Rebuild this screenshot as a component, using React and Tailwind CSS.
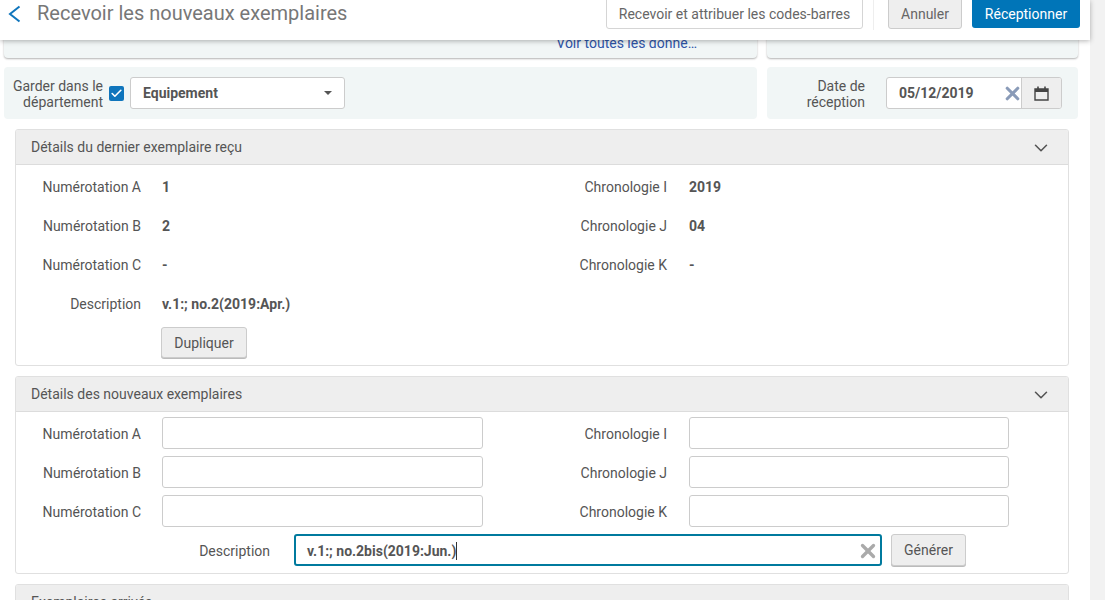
import React from 'react';
import { ChevronDown, X, Check } from 'lucide-react';

const font = 'font-[Roboto,sans-serif]';

function Panel({ title, children, className = '', chevron = true }) {
  return (
    <section className={`ml-[15px] mr-[21px] border border-[#e0e0e0] rounded-[3px] overflow-hidden bg-white ${className}`}>
      <div className="h-[35px] bg-[#eeeeee] border-b border-[#dcdcdc] flex items-center justify-between pl-[15px] pr-[16px]">
        <span className="text-[14px] text-[#555555]">{title}</span>
        {chevron && <ChevronDown className="w-[22px] h-[22px] text-[#555555] mt-px" strokeWidth={1.7} />}
      </div>
      {children}
    </section>
  );
}

function ReadRow({ left, leftValue, right, rightValue }) {
  return (
    <div className="h-[39px] flex items-center text-[14px] text-[#555555]">
      <span className="w-[125px] text-right">{left}</span>
      <span className="ml-[21px] w-[321px] font-bold">{leftValue}</span>
      <span className="w-[184px] text-right">{right}</span>
      <span className="ml-[22px] font-bold">{rightValue}</span>
    </div>
  );
}

function FieldRow({ left, right }) {
  return (
    <div className="h-[32px] flex items-center text-[14px] text-[#555555]">
      <span className="w-[125px] pt-[2px] text-right">{left}</span>
      <div className="ml-[21px] w-[321px] h-[32px] bg-white border border-[#cccccc] rounded-[3px]"></div>
      <span className="w-[184px] pt-[2px] text-right">{right}</span>
      <div className="ml-[22px] w-[320px] h-[32px] bg-white border border-[#cccccc] rounded-[3px]"></div>
    </div>
  );
}

export default function App() {
  return (
    <div className={`${font} w-[1105px] h-[600px] overflow-hidden flex bg-[#f2f2f2]`}>
      <div className="w-[1090px] h-full bg-white flex flex-col">
        {/* Top bar */}
        <header className="relative z-10 h-[40px] shrink-0 bg-white shadow-[0_1px_5px_rgba(0,0,0,0.3)] flex items-start">
          <svg className="ml-[6px] mt-[4px] w-[16px] h-[20px] text-[#0f75bc]" viewBox="0 0 16 20" fill="none" stroke="currentColor" strokeWidth="2">
            <path d="M13.5 2.5 L4 10 L13.5 17.5" />
          </svg>
          <h1 className="ml-[15px] mt-0 leading-[26px] text-[20px] font-normal text-[#777777]">
            Recevoir les nouveaux exemplaires
          </h1>
          <div className="ml-auto mr-[10px] flex items-start text-[14px]">
            <button className="w-[257px] h-[30px] -mt-px pt-px bg-white border border-[#d5d5d5] rounded-b-[3px] text-[#666666]">
              Recevoir et attribuer les codes-barres
            </button>
            <div className="ml-[10px] w-px h-[30px] bg-[#eeeeee]"></div>
            <button className="ml-[14px] w-[74px] h-[30px] -mt-px pt-px bg-[#eeeeee] border border-[#cccccc] rounded-b-[3px] text-[#666666]">
              Annuler
            </button>
            <button className="ml-[10px] w-[108px] h-[29px] -mt-px pt-px bg-[#0075b8] rounded-b-[3px] text-white">
              Réceptionner
            </button>
          </div>
        </header>

        {/* Cards cut off under the top bar */}
        <div className="flex gap-[10px] pl-[4px] pr-[12px] h-[18px] shrink-0">
          <div className="w-[753px] -mt-[10px] h-[28px] bg-[#f1f6f6] rounded-b-[4px] shadow-[0_1px_2px_rgba(0,0,0,0.3)] text-right pr-[60px] text-[14px] leading-[20px] pt-[3px] text-[#2f55a8]">
            Voir toutes les donne…
          </div>
          <div className="w-[311px] -mt-[10px] h-[28px] bg-[#f1f6f6] rounded-b-[4px] shadow-[0_1px_2px_rgba(0,0,0,0.3)]"></div>
        </div>

        {/* Department and date */}
        <div className="mt-[9px] flex gap-[10px] pl-[4px] pr-[12px] h-[52px] shrink-0 text-[14px] text-[#555555]">
          <div className="w-[753px] bg-[#f1f6f6] rounded-[4px] flex items-center">
            <span className="w-[99px] pt-px text-right leading-[16px]">Garder dans le département</span>
            <span className="ml-[6px] w-[15px] h-[15px] bg-[#0f75bc] rounded-[2px] flex items-center justify-center">
              <Check className="w-[13px] h-[13px] text-white" strokeWidth={3} />
            </span>
            <div className="ml-[6px] w-[215px] h-[32px] bg-white border border-[#cccccc] rounded-[3px] flex items-center justify-between pl-[12px] pr-[12px]">
              <span className="font-bold">Equipement</span>
              <span className="w-0 h-0 border-x-[4px] border-x-transparent border-t-[4px] border-t-[#555555]"></span>
            </div>
          </div>
          <div className="w-[311px] bg-[#f1f6f6] rounded-[4px] flex items-center">
            <span className="w-[98px] pt-px text-right leading-[16px]">Date de réception</span>
            <div className="ml-[21px] w-[176px] h-[32px] bg-white border border-[#cccccc] rounded-[3px] flex items-center overflow-hidden">
              <span className="ml-[12px] font-bold">05/12/2019</span>
              <X className="ml-auto -mr-[2px] w-[21px] h-[21px] text-[#8a9bb8]" strokeWidth={3.6} />
              <div className="w-[40px] h-full bg-[#eeeeee] border-l border-[#cccccc] flex items-center justify-center">
                <svg className="w-[15px] h-[15px] text-[#444444]" viewBox="0 0 15 15" fill="none" stroke="currentColor">
                  <path d="M1 3 H14 V14 H1 Z" strokeWidth="1.4" />
                  <path d="M1 4.5 H14" strokeWidth="3" />
                  <path d="M4 0.5 V3 M11 0.5 V3" strokeWidth="1.6" />
                </svg>
              </div>
            </div>
          </div>
        </div>

        {/* Last received item */}
        <Panel title="Détails du dernier exemplaire reçu" className="mt-[10px] h-[237px] shrink-0">
          <div className="pt-[3px]">
            <ReadRow left="Numérotation A" leftValue="1" right="Chronologie I" rightValue="2019" />
            <ReadRow left="Numérotation B" leftValue="2" right="Chronologie J" rightValue="04" />
            <ReadRow left="Numérotation C" leftValue="-" right="Chronologie K" rightValue="-" />
            <ReadRow left="Description" leftValue="v.1:; no.2(2019:Apr.)" />
            <button className="ml-[145px] mt-[3px] w-[86px] h-[31px] pt-px bg-[#eeeeee] border border-[#cccccc] rounded-[3px] shadow-[0_1px_0_#bbbbbb] text-[14px] text-[#555555]">
              Dupliquer
            </button>
          </div>
        </Panel>

        {/* New items */}
        <Panel title="Détails des nouveaux exemplaires" className="mt-[10px] h-[198px] shrink-0">
          <div className="pt-[5px] flex flex-col gap-[7px]">
            <FieldRow left="Numérotation A" right="Chronologie I" />
            <FieldRow left="Numérotation B" right="Chronologie J" />
            <FieldRow left="Numérotation C" right="Chronologie K" />
            <div className="h-[32px] flex items-center text-[14px] text-[#555555]">
              <span className="w-[254px] pt-[2px] text-right">Description</span>
              <div className="ml-[24px] w-[588px] h-[32px] pt-px bg-white border-2 border-[#007a9e] rounded-[3px] flex items-center pl-[11px] pr-[1px]">
                <span className="font-bold border-r border-[#333333] leading-[18px]">v.1:; no.2bis(2019:Jun.)</span>
                <X className="ml-auto w-[22px] h-[22px] text-[#aaaaaa]" strokeWidth={3.6} />
              </div>
              <button className="ml-[9px] w-[75px] h-[32px] pt-px bg-[#eeeeee] border border-[#cccccc] rounded-[3px] shadow-[0_1px_0_#bbbbbb] text-[#555555]">
                Générer
              </button>
            </div>
          </div>
        </Panel>

        <Panel title="Exemplaires arrivés" chevron={false} className="mt-[10px] h-[60px] shrink-0" />
      </div>
    </div>
  );
}
